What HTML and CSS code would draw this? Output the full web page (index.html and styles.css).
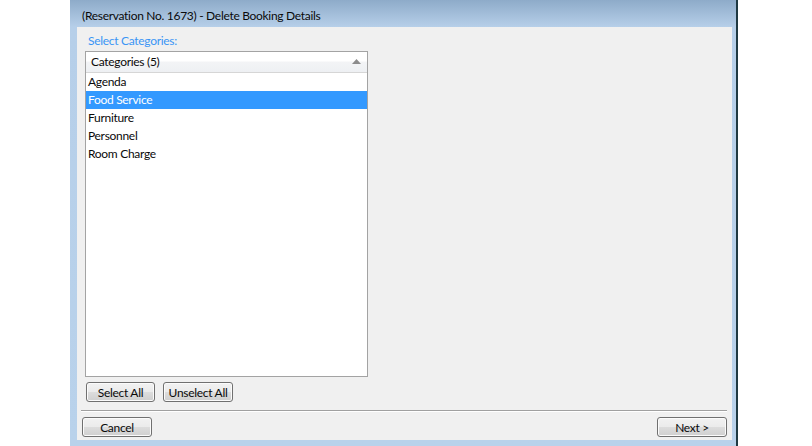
FILE: index.html
```html
<!DOCTYPE html>
<html>
<head>
<meta charset="utf-8">
<link rel="stylesheet" href="styles.css">
</head>
<body>
<div class="window">
  <div class="titlebar">(Reservation No. 1673) - Delete Booking Details</div>
  <div class="client">
    <div class="label">Select Categories:</div>
    <div class="listbox">
      <div class="list-header">
        <span>Categories (5)</span>
        <svg class="sort" width="9" height="5" viewBox="0 0 9 5"><polygon points="0,5 9,5 4.5,0" fill="#8c8c8c"/></svg>
      </div>
      <div class="row">Agenda</div>
      <div class="row selected">Food Service</div>
      <div class="row">Furniture</div>
      <div class="row">Personnel</div>
      <div class="row">Room Charge</div>
    </div>
    <div class="list-buttons">
      <button class="btn btn-select">Select All</button>
      <button class="btn btn-unselect">Unselect All</button>
    </div>
    <div class="separator"></div>
    <div class="footer">
      <button class="btn btn-wide">Cancel</button>
      <button class="btn btn-wide">Next &gt;</button>
    </div>
  </div>
</div>
</body>
</html>
```
FILE: styles.css
```css
html, body {
  margin: 0;
  padding: 0;
  background: #ffffff;
  overflow: hidden;
}
body {
  font-family: "Lato", "Liberation Sans", sans-serif;
  font-size: 12px;
  letter-spacing: -0.3px;
  color: #0a0a0a;
}
.window {
  margin-left: 70px;
  width: 655px;
  height: 446px;
  padding: 0 4px 0 7px;
  box-sizing: content-box;
  border-right: 2px solid #1f3942;
  background: linear-gradient(#8eabc9 0, #b6cfe9 27px, #b9d2eb 100%);
}
.titlebar {
  height: 27px;
  line-height: 31px;
  padding-left: 5px;
  color: #0a0a0a;
  white-space: nowrap;
}
.client {
  height: 413px;
  background: #f0f0f0;
  display: flex;
  flex-direction: column;
  padding: 0 5px 0 4px;
  box-sizing: border-box;
}
.label {
  color: #3a95f5;
  padding: 7px 0 0 7px;
  height: 17px;
  line-height: 14px;
}
.listbox {
  margin-left: 4px;
  width: 283px;
  height: 326px;
  box-sizing: border-box;
  border: 1px solid #a3a3a3;
  background: #ffffff;
}
.list-header {
  height: 21px;
  box-sizing: border-box;
  border-bottom: 1px solid #d6d6d6;
  background: linear-gradient(#ffffff 0, #ffffff 45%, #f3f4f6 50%, #eef0f3 100%);
  display: flex;
  align-items: center;
  justify-content: space-between;
  padding: 0 5px 1px 5px;
}
.sort {
  margin-right: 1px;
}
.row {
  height: 18px;
  line-height: 18px;
  padding-left: 2px;
}
.row.selected {
  background: #3399ff;
  color: #ffffff;
}
.list-buttons {
  display: flex;
  gap: 8px;
  margin: 5px 0 0 5px;
}
.btn {
  font-family: inherit;
  font-size: 12px;
  letter-spacing: -0.3px;
  color: #0a0a0a;
  height: 20px;
  padding: 0;
  border: 1px solid #707070;
  border-radius: 3px;
  background: linear-gradient(#f2f2f2 0, #ebebeb 50%, #dddddd 50%, #cfcfcf 100%);
  box-shadow: inset 0 0 0 1px #fbfbfb;
}
.btn-select { width: 69px; }
.btn-unselect { width: 70px; }
.btn-wide { width: 70px; }
.separator {
  margin: 8px 0 0 0;
  height: 0;
  border-top: 1px solid #a0a0a0;
  border-bottom: 1px solid #ffffff;
}
.footer {
  display: flex;
  justify-content: space-between;
  margin: 5px 0 0 1px;
}
```
